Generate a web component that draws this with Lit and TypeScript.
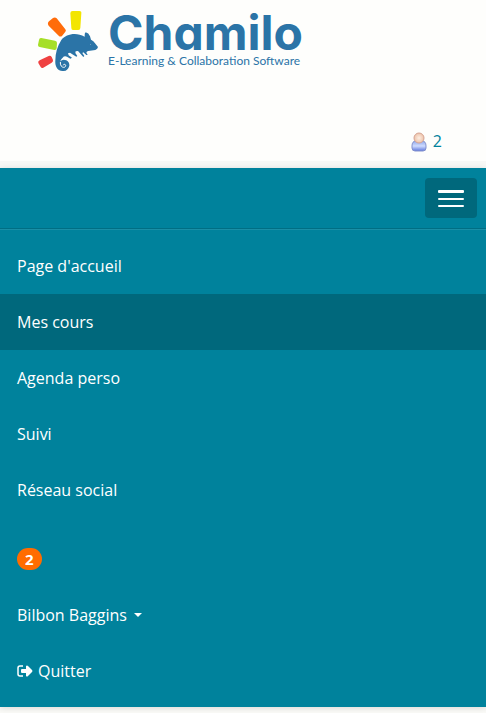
import { LitElement, html, css, svg } from "lit";
import { customElement, state } from "lit/decorators.js";
import { classMap } from "lit/directives/class-map.js";

const mascot = svg`
  <path fill="#f3e500" d="M128 33h20q7 0 6 7l-3 44q0 6-6 6h-16q-5 0-5-6l-3-44q0-7 7-7z"/>
  <path fill="#ff6c0a" d="M57 64l12-10q6-4 11 1l26 33q4 5-1 9l-9 11q-5 4-10-1L56 77q-5-7 1-13z"/>
  <path fill="#a6df27" d="M34 114l41 8q6 1 6 7l-1 16q-1 6-7 5l-44-9q-6-1-5-7l3-14q1-7 7-6z"/>
  <path fill="#ef4141" d="M29 181l27-13q6-2 9 3l4 9q1 5-4 8l-25 15q-5 3-8-2l-7-12q-2-5 4-8z"/>
  <path fill="#2b74a7" d="M88 211C78 205 75 194 76 181C76 160 82 138 94 120C108 102 138 96 164 110Q163 100 167 97Q176 99 180 109L183 119Q191 123 195 130L204 141Q203 147 196 150L175 153Q170 154 169 158L173 165L169 165L160 157L157 159L163 168L160 171L144 153L137 154L136 159L142 168L139 170L127 163L120 158L114 160L116 166L126 173L121 176L111 170Q103 166 98 173Q92 178 91 184Q98 176 109 181Q119 187 118 197Q114 212 101 213Q93 214 88 211z"/>
  <path fill="none" stroke="#fefefc" stroke-width="3" stroke-linecap="round" d="M91 187C90 196 95 202 101 202C108 202 109 194 104 193Q101 192 100 195"/>
  <circle fill="#fefefc" cx="181" cy="133" r="1"/>`;

const userIcon = svg`
  <defs>
    <linearGradient id="body" x1="0" y1="0" x2="0" y2="1">
      <stop offset="0" stop-color="#8fa6e8"/><stop offset="0.5" stop-color="#cfdcff"/><stop offset="1" stop-color="#5f78dd"/>
    </linearGradient>
    <radialGradient id="head">
      <stop offset="0" stop-color="#fdeee2"/><stop offset="1" stop-color="#edc3aa"/>
    </radialGradient>
  </defs>
  <path fill="url(#body)" stroke="#8391cc" d="M1 14q0-5 4-5h6q4 0 4 5v2q0 3-3 3H4q-3 0-3-3z"/>
  <circle fill="url(#head)" stroke="#d6a594" cx="8" cy="6" r="5"/>`;

@customElement("app-root")
export class AppRoot extends LitElement {
  static styles = css`
    :host {
      display: block;
      min-height: 100vh;
      background: #fafaf7;
      color: #fff;
      font: 16px/22px "Open Sans", sans-serif;
    }
    a {
      color: inherit;
      text-decoration: none;
    }
    header {
      background: #fefefc;
      border-bottom: 7px solid #f7f8f6;
    }
    .brand {
      display: flex;
      padding: 10px 36px 0;
      gap: 8px;
      height: 110px;
      color: #2b74a7;
    }
    .mascot {
      width: 64px;
      height: 64px;
      flex: none;
    }
    .words {
      display: flex;
      flex-direction: column;
      white-space: nowrap;
    }
    .name {
      font: 700 48px/46px Inter, sans-serif;
      font-feature-settings: "cv11";
    }
    .tagline {
      font: 12px/10px Lato, sans-serif;
    }
    .online {
      display: flex;
      justify-content: flex-end;
      padding: 10px 44px 9px;
      color: #00829c;
    }
    .online a {
      display: flex;
      gap: 6px;
    }
    .user {
      width: 16px;
      height: 20px;
      margin-top: 2px;
    }
    nav {
      background: #00829c;
      box-shadow: 0 1px 6px #0002;
    }
    .bar {
      display: flex;
      justify-content: flex-end;
      padding: 10px 9px;
      border-bottom: 1px solid #006e84;
    }
    .toggle {
      display: flex;
      flex-direction: column;
      align-items: center;
      justify-content: center;
      gap: 5px;
      width: 52px;
      height: 40px;
      padding: 0;
      border: 0;
      border-radius: 4px;
      background: #00687c;
      cursor: pointer;
    }
    .line {
      width: 26px;
      height: 2px;
      border-radius: 1px;
      background: #fff;
    }
    .line:first-child {
      height: 3px;
    }
    .menu {
      border-top: 1px solid #1a8fa6;
      padding: 8px 0;
    }
    ul {
      list-style: none;
      margin: 0;
      padding: 0;
    }
    ul + ul {
      margin-top: 13px;
    }
    .item {
      display: flex;
      align-items: center;
      padding: 17px;
      gap: 5px;
    }
    .active {
      background: #00687c;
    }
    .badge {
      padding: 0 8px;
      border-radius: 11px;
      background: #ff6c00;
      font-size: 15px;
      font-weight: 700;
    }
    .caret {
      margin-left: 2px;
      border: 4px solid transparent;
      border-top-color: #fff;
      border-bottom: 0;
    }
    .exit {
      width: 16px;
      height: 14px;
    }
  `;

  @state() private open = true;

  private links = ["Page d'accueil", "Mes cours", "Agenda perso", "Suivi", "Réseau social"];
  private current = "Mes cours";

  render() {
    return html`
      <header>
        <a class="brand" href="#">
          <svg class="mascot" viewBox="18 30 192 192" aria-hidden="true">${mascot}</svg>
          <span class="words">
            <span class="name">Chamilo</span>
            <span class="tagline">E-Learning &amp; Collaboration Software</span>
          </span>
        </a>
        <div class="online">
          <a href="#" aria-label="2 utilisateurs en ligne">
            <svg class="user" viewBox="0 0 16 20" aria-hidden="true">${userIcon}</svg>2
          </a>
        </div>
      </header>
      <nav>
        <div class="bar">
          <button class="toggle" aria-label="Menu" aria-expanded=${this.open} @click=${() => (this.open = !this.open)}>
            <span class="line"></span><span class="line"></span><span class="line"></span>
          </button>
        </div>
        ${this.open
          ? html`<div class="menu">
              <ul>
                ${this.links.map(
                  (label) => html`<li>
                    <a href="#" class=${classMap({ item: true, active: label === this.current })}>${label}</a>
                  </li>`
                )}
              </ul>
              <ul>
                <li><a class="item" href="#"><span class="badge">2</span></a></li>
                <li><a class="item" href="#">Bilbon Baggins<span class="caret"></span></a></li>
                <li>
                  <a class="item" href="#">
                    <svg class="exit" viewBox="0 0 16 14" aria-hidden="true">
                      <path fill="none" stroke="#fff" stroke-width="1.5" d="M6 2H3Q1 2 1 4v6q0 2 2 2h3"/>
                      <path fill="#fff" d="M5 5h4V2q1-1 2 0l4 4q1 1 0 2l-4 4q-1 1-2 0V9H5q-1 0-1-1V6q0-1 1-1z"/>
                    </svg>Quitter
                  </a>
                </li>
              </ul>
            </div>`
          : null}
      </nav>
    `;
  }
}
